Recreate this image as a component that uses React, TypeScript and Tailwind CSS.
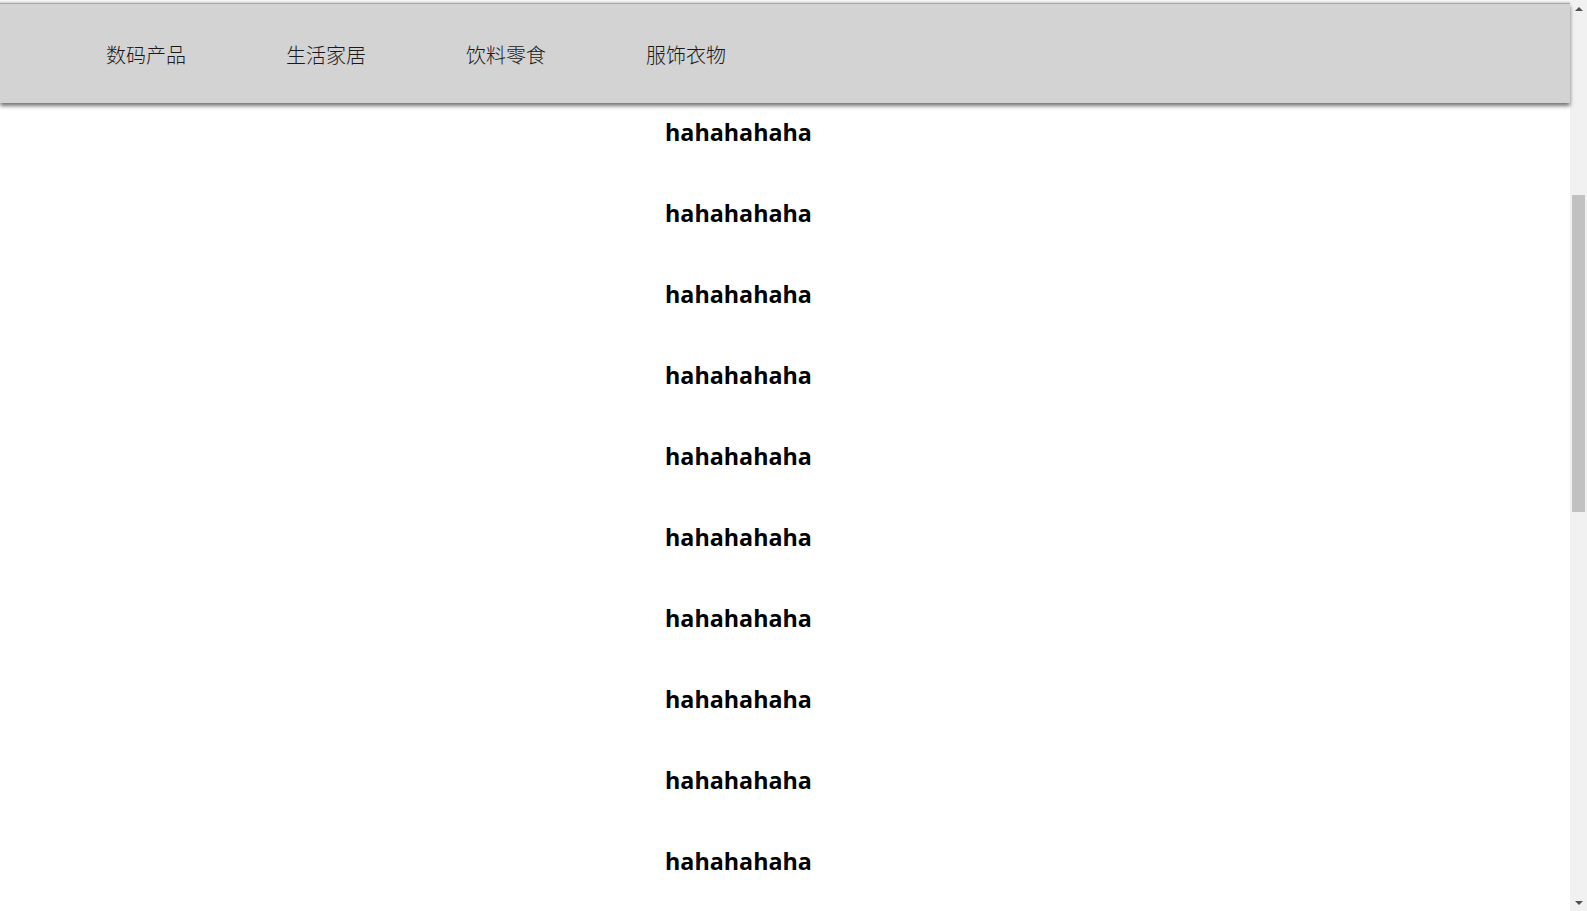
const navItems = ["数码产品", "生活家居", "饮料零食", "服饰衣物"];
const rows = Array.from({ length: 10 }, () => "hahahahaha");

const Scrollbar = () => (
    <div className="w-[17px] h-full bg-[#f1f1f1] flex flex-col items-center shrink-0">
        <div className="h-[17px] w-full flex items-center justify-center">
            <span className="w-0 h-0 border-l-[4px] border-r-[4px] border-b-[4px] border-l-transparent border-r-transparent border-b-[#505050]" />
        </div>
        <div className="mt-[178px] w-[13px] h-[317px] bg-[#c1c1c1]" />
        <div className="flex-1" />
        <div className="h-[17px] w-full flex items-center justify-center">
            <span className="w-0 h-0 border-l-[4px] border-r-[4px] border-t-[4px] border-l-transparent border-r-transparent border-t-[#505050]" />
        </div>
    </div>
);

export default function App() {
    return (
        <div className="flex h-[911px] w-full overflow-hidden bg-white">
            <div className="flex-1 flex flex-col min-w-0 relative">
                <div className="h-[3px] shrink-0 bg-gradient-to-b from-white to-[#d9d9d9]" />
                <nav className="relative z-10 h-[100px] shrink-0 bg-[#d3d3d3] border-t border-[#a8a8a8] shadow-[0_3px_4px_rgba(0,0,0,0.55)] flex items-center pl-[106px] gap-[100px] pt-[2px]">
                    {navItems.map((item) => (
                        <span key={item} className="text-[20px] font-light text-[#1a1a1a] leading-none" style={{ fontFamily: '"Noto Sans CJK SC", "Noto Sans", sans-serif' }}>
                            {item}
                        </span>
                    ))}
                </nav>
                <div className="mt-[13px] pl-[665px] shrink-0" style={{ fontFamily: '"Open Sans", "Liberation Sans", sans-serif' }}>
                    {rows.map((r, i) => (
                        <div key={i} className="h-[81px]">
                            <h2 className="text-[23.3px] font-bold leading-[32px] text-black">{r}</h2>
                        </div>
                    ))}
                </div>
            </div>
            <Scrollbar />
        </div>
    );
}
